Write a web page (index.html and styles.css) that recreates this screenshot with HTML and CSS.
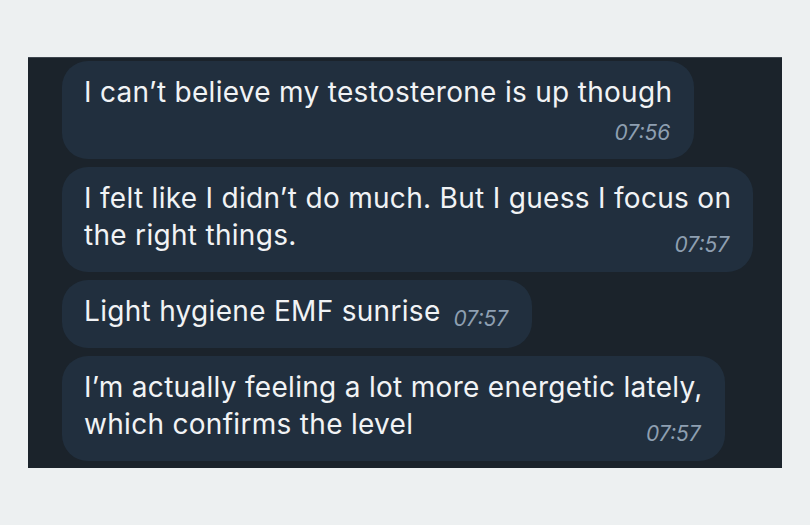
FILE: index.html
```html
<!DOCTYPE html>
<html lang="en">
<head>
<meta charset="utf-8">
<title>Chat</title>
<link rel="stylesheet" href="styles.css">
</head>
<body>
<div class="panel">
  <div class="bubble">
    <div class="text">I can’t believe my testosterone is up though</div>
    <div class="time time-block">07:56</div>
  </div>
  <div class="bubble">
    <div class="text">I felt like I didn’t do much. But I guess I focus on<br>the right things.<span class="time time-float">07:57</span></div>
  </div>
  <div class="bubble">
    <div class="text">Light hygiene EMF sunrise<span class="time time-float time-tight">07:57</span></div>
  </div>
  <div class="bubble">
    <div class="text">I’m actually feeling a lot more energetic lately,<br>which confirms the level<span class="time time-float">07:57</span></div>
  </div>
</div>
</body>
</html>
```

FILE: styles.css
```css
html, body {
  margin: 0;
  padding: 0;
  background: #edf0f1;
}
body {
  width: 810px;
  height: 525px;
  overflow: hidden;
  font-family: Inter, "Noto Sans", sans-serif;
}
.panel {
  box-sizing: border-box;
  margin: 57px 0 0 28px;
  width: 754px;
  height: 411px;
  background: #1b232b;
  border-top: 1px solid #3e464f;
  padding: 3px 0 8px 34px;
  display: flex;
  flex-direction: column;
  align-items: flex-start;
  gap: 8px;
}
.bubble {
  background: #212f3e;
  border-radius: 26px;
  padding: 13px 22px 18px 22px;
  width: fit-content;
  color: #f1f3f5;
}
.text {
  font-size: 28px;
  line-height: 37px;
  letter-spacing: 0.3px;
  white-space: nowrap;
}
.time {
  font-size: 21px;
  line-height: 16px;
  letter-spacing: 0;
  font-style: italic;
  color: #8e9fb1;
  white-space: nowrap;
}
.time-block {
  display: block;
  text-align: right;
  margin-top: 14px;
  margin-right: 2px;
}
.time-float {
  float: right;
  margin: 20px 2px 0 15px;
}
.time-tight {
  margin-left: 13px;
  margin-top: 18px;
}
```
